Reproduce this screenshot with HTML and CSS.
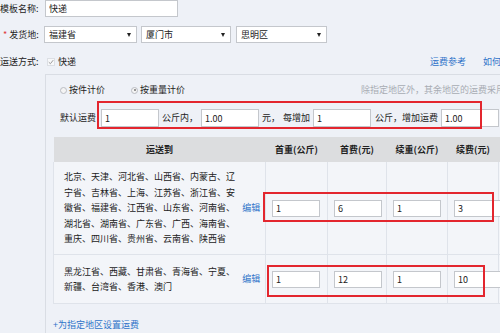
FILE: index.html
```html
<!DOCTYPE html>
<html lang="zh-CN">
<head>
<meta charset="utf-8">
<title>运费模板</title>
<link rel="stylesheet" href="styles.css">
</head>
<body>
<div class="page">
  <div class="row r-name">
    <span class="lbl">模板名称:</span>
    <input class="inp w-name" type="text" value="快递">
  </div>
  <div class="row r-ship">
    <span class="lbl lbl-ship"><span class="req">*</span> 发货地:</span>
    <div class="sel s1"><span>福建省</span><i class="arr"></i></div>
    <div class="sel s2"><span>厦门市</span><i class="arr"></i></div>
    <div class="sel s3"><span>思明区</span><i class="arr"></i></div>
  </div>
  <div class="row r-mode">
    <span class="lbl">运送方式:</span>
    <span class="chk"><svg width="8" height="8" viewBox="0 0 8 8"><path d="M1 4.2 L3.2 6.3 L7 1.5" fill="none" stroke="#9a9a9a" stroke-width="1.3"/></svg></span>
    <span class="chk-txt">快递</span>
    <a class="link ref">运费参考</a>
    <a class="link how">如何</a>
  </div>
  <div class="panel">
    <div class="radios">
      <span class="radio"></span><span class="rtxt">按件计价</span>
      <span class="radio on"></span><span class="rtxt">按重量计价</span>
      <span class="hint">除指定地区外，其余地区的运费采用</span>
    </div>
    <div class="default">
      <span>默认运费</span>
      <input class="inp dv first" type="text" value="1">
      <span class="t">公斤内，</span>
      <input class="inp dv" type="text" value="1.00">
      <span class="t">元，</span>
      <span class="t">每增加</span>
      <input class="inp dv" type="text" value="1">
      <span class="t t4">公斤，增加运费</span>
      <input class="inp dv" type="text" value="1.00">
    </div>
    <table class="fees">
      <colgroup>
        <col class="c-area"><col class="c-edit"><col class="c3"><col class="c4"><col class="c5"><col class="c6"><col class="c7">
      </colgroup>
      <thead>
        <tr>
          <th colspan="2">运送到</th>
          <th>首重(公斤)</th>
          <th>首费(元)</th>
          <th>续重(公斤)</th>
          <th>续费(元)</th>
          <th></th>
        </tr>
      </thead>
      <tbody>
        <tr class="tr1">
          <td class="area">北京、天津、河北省、山西省、内蒙古、辽宁省、吉林省、上海、江苏省、浙江省、安徽省、福建省、江西省、山东省、河南省、湖北省、湖南省、广东省、广西、海南省、重庆、四川省、贵州省、云南省、陕西省</td>
          <td class="edit"><a class="link">编辑</a></td>
          <td><input class="inp cv" type="text" value="1"></td>
          <td><input class="inp cv" type="text" value="6"></td>
          <td><input class="inp cv" type="text" value="1"></td>
          <td><input class="inp cv" type="text" value="3"></td>
          <td><input class="inp cv" type="text" value=""></td>
        </tr>
        <tr class="tr2">
          <td class="area">黑龙江省、西藏、甘肃省、青海省、宁夏、新疆、台湾省、香港、澳门</td>
          <td class="edit"><a class="link">编辑</a></td>
          <td><input class="inp cv" type="text" value="1"></td>
          <td><input class="inp cv" type="text" value="12"></td>
          <td><input class="inp cv" type="text" value="1"></td>
          <td><input class="inp cv" type="text" value="10"></td>
          <td><input class="inp cv" type="text" value=""></td>
        </tr>
      </tbody>
    </table>
    <a class="link add">+为指定地区设置运费</a>
  </div>
  <div class="mark m1"></div>
  <div class="mark m2"></div>
  <div class="mark m3"></div>
</div>
</body>
</html>
```
FILE: styles.css
```css
html, body {
  margin: 0;
  padding: 0;
  overflow: hidden;
  background: #eef1f7;
}
body {
  font-family: "Noto Sans CJK SC", "Liberation Sans", sans-serif;
  font-size: 9px;
  line-height: 1.3;
  color: #222;
}
.page {
  position: relative;
  width: 620px;
  height: 333px;
}
.row {
  display: flex;
  align-items: center;
  white-space: nowrap;
}
.lbl {
  width: 45px;
  flex: none;
}
.inp {
  box-sizing: border-box;
  height: 17px;
  border: 1px solid #c4c7cc;
  background: #fff;
  padding: 0 3px;
  margin: 0;
  font-family: inherit;
  font-size: 9px;
  color: #222;
  outline: none;
}
.r-name {
  height: 17px;
}
.w-name {
  width: 133px;
}
.r-ship {
  margin-top: 9px;
  height: 17px;
}
.lbl-ship {
  width: 44px;
  padding-left: 3px;
  box-sizing: border-box;
}
.req {
  color: #e03a3a;
}
.sel {
  box-sizing: border-box;
  height: 17px;
  border: 1px solid #c4c7cc;
  background: #fff;
  display: flex;
  align-items: center;
  justify-content: space-between;
  padding: 0 5px 0 4px;
  flex: none;
}
.s1 { width: 93px; margin-right: 4px; }
.s2 { width: 90px; margin-right: 5px; }
.s3 { width: 91px; }
.arr {
  width: 0;
  height: 0;
  border-left: 2.5px solid transparent;
  border-right: 2.5px solid transparent;
  border-top: 4px solid #222;
}
.r-mode {
  margin-top: 12px;
  height: 14px;
}
.chk {
  display: flex;
  align-items: center;
  justify-content: center;
  box-sizing: border-box;
  width: 8px;
  height: 8px;
  margin-left: 2px;
  border: 1px solid #dcdfe4;
  background: #f7f8fa;
}
.chk-txt {
  margin-left: 3px;
}
.link {
  color: #2f73c9;
  text-decoration: none;
  cursor: pointer;
}
.ref {
  margin-left: 354px;
}
.how {
  margin-left: 17px;
}
.panel {
  margin-left: 45px;
  margin-top: 5px;
  height: 259px;
  border-top: 1px solid #d9dde4;
  border-left: 1px solid #d9dde4;
  padding-top: 7px;
  box-sizing: border-box;
}
.radios {
  display: flex;
  align-items: center;
  height: 16px;
  padding-left: 14px;
  white-space: nowrap;
}
.radio {
  box-sizing: border-box;
  width: 7px;
  height: 7px;
  border-radius: 50%;
  border: 1px solid #b9bcc2;
  background: #f4f4f4;
  flex: none;
  position: relative;
}
.radio.on::after {
  content: "";
  position: absolute;
  left: 1.5px;
  top: 1.5px;
  width: 2px;
  height: 2px;
  border-radius: 50%;
  background: #777;
}
.rtxt {
  margin-left: 2px;
}
.radio.on {
  margin-left: 26px;
}
.hint {
  margin-left: 176px;
  color: #a8acb3;
}
.default {
  display: flex;
  align-items: center;
  height: 18px;
  margin-top: 11px;
  padding-left: 14px;
  white-space: nowrap;
}
.dv {
  width: 58px;
  height: 18px;
  margin-left: 3px;
  flex: none;
}
.dv.first {
  margin-left: 5px;
}
.t {
  margin-left: 3px;
}
.t4 {
  margin-left: 4px;
}
.fees {
  margin-top: 10px;
  margin-left: 7px;
  border-collapse: collapse;
  table-layout: fixed;
  width: 504px;
}
.c-area { width: 184px; }
.c-edit { width: 28px; }
.c3 { width: 62px; }
.c4 { width: 59px; }
.c5 { width: 61px; }
.c6 { width: 51px; }
.c7 { width: 59px; }
.fees th {
  height: 25px;
  background: #dcdddf;
  font-weight: bold;
  color: #222;
  text-align: center;
  padding: 0;
  white-space: nowrap;
}
.fees td {
  background: #f3f5f9;
  border-left: 1px solid #dfe3ea;
  border-bottom: 1px solid #dfe3ea;
  vertical-align: middle;
  padding: 0 0 0 6px;
}
.fees td.area {
  border-left: 1px solid #dfe3ea;
  padding: 0 0 0 10px;
  line-height: 15.5px;
  color: #222;
}
.fees td.edit {
  border-left: none;
  padding: 0;
  text-align: center;
}
.tr1 td { height: 92px; }
.tr2 td { height: 48px; }
.cv {
  width: 48px;
  height: 17px;
}
.add {
  display: block;
  margin-top: 15px;
  margin-left: 7px;
}
.mark {
  position: absolute;
  box-sizing: border-box;
  border: 2px solid #e3262e;
}
.m1 { left: 97px; top: 101px; width: 385px; height: 28px; }
.m2 { left: 263px; top: 192px; width: 231px; height: 30px; }
.m3 { left: 267px; top: 265px; width: 218px; height: 32px; }
```
